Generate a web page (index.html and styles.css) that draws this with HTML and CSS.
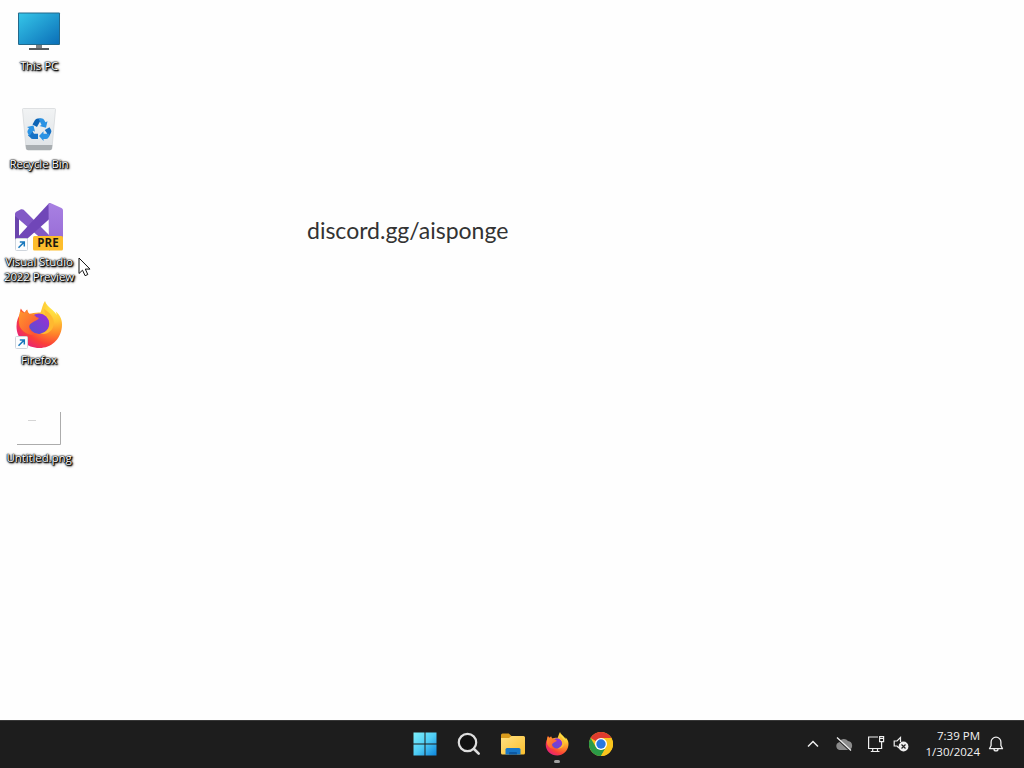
FILE: index.html
```
<!DOCTYPE html>
<html lang="en">

<head>
    <meta charset="utf-8">
    <title>Desktop</title>
    <link rel="stylesheet" href="styles.css">
</head>

<body>
    <!-- shared gradients and symbols -->
    <svg class="defs" width="0" height="0">
        <defs>
            <linearGradient id="screen" x1="0" y1="0" x2="1" y2="1">
                <stop offset="0" stop-color="#35c5e8"/>
                <stop offset="1" stop-color="#0b6fb8"/>
            </linearGradient>
            <linearGradient id="bin" x1="0" y1="0" x2="0" y2="1">
                <stop offset="0" stop-color="#f1f3f4"/>
                <stop offset="1" stop-color="#dfe3e6"/>
            </linearGradient>
            <linearGradient id="column" x1="0" y1="0" x2="0" y2="1">
                <stop offset="0" stop-color="#a880e2"/>
                <stop offset="1" stop-color="#9468d4"/>
            </linearGradient>
            <radialGradient id="flame" cx="0.85" cy="0.12" r="1">
                <stop offset="0" stop-color="#fff14a"/>
                <stop offset="0.32" stop-color="#ffc533"/>
                <stop offset="0.58" stop-color="#ff8429"/>
                <stop offset="0.82" stop-color="#fb4038"/>
                <stop offset="1" stop-color="#e92670"/>
            </radialGradient>
            <linearGradient id="fox" x1="0" y1="0" x2="1" y2="1">
                <stop offset="0" stop-color="#ff9a2c"/>
                <stop offset="1" stop-color="#fb4a36"/>
            </linearGradient>
            <linearGradient id="globe" x1="1" y1="0" x2="0.2" y2="1">
                <stop offset="0" stop-color="#a12bd6"/>
                <stop offset="1" stop-color="#5a4fd0"/>
            </linearGradient>
            <linearGradient id="start" x1="0" y1="0" x2="1" y2="1">
                <stop offset="0" stop-color="#7df0fb"/>
                <stop offset="0.5" stop-color="#4fcdf5"/>
                <stop offset="1" stop-color="#0c84dc"/>
            </linearGradient>
            <linearGradient id="folder" x1="0" y1="0" x2="1" y2="1">
                <stop offset="0" stop-color="#ffe182"/>
                <stop offset="1" stop-color="#fbbf2d"/>
            </linearGradient>
            <symbol id="firefox" viewBox="0 0 48 48">
                <path fill="url(#flame)" d="M30 0c1 3.600 4 6 7.200 8.800 2.200 2 3.600 3.700 4.400 5.200-.2-1.700-.4-2.500-1-3.700 5.400 4.500 7 10 6.300 15.700C45.600 38.500 36 47 24.500 47 12 47 1.500 38 1.500 25.500c0-6 2-10 3.500-12.500-.2-2 .1-4 .9-5.600 1 2 2.400 3.200 4 4 .5-1.200 1.200-2.200 2.400-2.900 0 1.800 1 3.300 2.200 4.300C17 12.500 21 11 25.500 11.500 27 8 27.500 3.500 30 0z"/>
                <circle cx="24" cy="22.800" r="10.300" fill="url(#globe)"/>
                <path fill="#ffb930" d="M30 14c3.500 2.500 5.200 6 4.400 10-.8 4.500-4.500 7.800-9 8.500 7 1.800 12.500-2.800 13.500-9.500C39.500 16.500 34 11 29 8z"/>
                <path fill="url(#fox)" d="M5.300 9.500c1.200 1.500 2.700 2.200 4.300 2.400l2.600-2.700c.2 2 1.200 3.300 2.600 4.200 3-.4 5 .9 6.300 2.500l2.700 1.100c-.5 2.200-3.600 2.600-4.800 3.600-2 1.500-4.400 2.500-5 4.900-.8 4.100 3 7.500 8 7.500-6 2.500-14.500-1-17.500-8-1.200-5-.8-10.500.8-15.500z"/>
            </symbol>
            <symbol id="shortcut" viewBox="0 0 13 13">
                <rect x="0.500" y="0.500" width="12" height="12" rx="1" fill="#fcfdfe" stroke="#cfd5dc"/>
                <path d="M3.500 9.700 8.600 4.600M4.800 3.900h4.500v4.500" fill="none" stroke="#1878bd" stroke-width="1.500"/>
            </symbol>
        </defs>
    </svg>

    <main class="desktop">
        <div class="shortcuts">
            <div class="shortcut">
                <svg class="icon" viewBox="0 0 48 48">
                    <path fill="#7b8084" d="M21 38h6v4h-6z"/>
                    <path fill="#565b5f" d="M14 41h20v2H14z"/>
                    <rect x="3" y="5.500" width="42" height="32.500" rx="1" fill="#23698b"/>
                    <rect x="4" y="6.500" width="40" height="30.500" fill="url(#screen)"/>
                </svg>
                <span class="label">This PC</span>
            </div>
            <div class="shortcut">
                <svg class="icon" viewBox="0 0 48 48">
                    <path fill="url(#bin)" stroke="#d2d6d9" stroke-width=".7" d="M7.500 4.500q0-1 1-1h31q1 0 1 1L37 43q-.2 1.500-1.700 1.500H12.700Q11.200 44.500 11 43z"/>
                    <path fill="#a9aeb1" d="M10.700 40h26.600l-.4 3.500q-.2 1.700-1.900 1.700H13q-1.700 0-1.900-1.700z"/>
                    <g fill="#2b93e4">
                        <path fill="#0c63b5" d="M17.500 19.500l2.500-4.500q1-1.600 2.600-1.600h4l-4.600 8.600z"/>
                        <path d="M23.500 13.400h3.500q1.200 0 2 1.300l1.500 2.600 2-1-1.500 6.500-6.500-1.700 2-1.200z"/>
                        <path fill="#1672c6" d="M29.700 25l4.800-2.800 1.500 2.600q.8 1.500 0 3l-1.500 2.700q-.9 1.600-2.800 1.600l-3-.1 3.500-3.500z"/>
                        <path d="M34.500 31l-1.200 1.700q-.8 1.300-2.300 1.300h-2.500v2L24 31l4.500-4.700v2.400h5.500z"/>
                        <path fill="#1672c6" d="M13 30.500l4-5 2 3.300h4V34h-5q-1.800 0-2.700-1.500z"/>
                        <path d="M14.500 31l-1.700-2.700q-.8-1.500 0-3l1.200-2-2-1.300 6.500-1.500 1.500 6.300-2-1z"/>
                    </g>
                </svg>
                <span class="label">Recycle Bin</span>
            </div>
            <div class="shortcut">
                <svg class="icon" viewBox="0 0 48 48">
                    <path fill="#6a45ad" d="M0 10.500 4 13v21L0 38z"/>
                    <path fill="#8259c6" d="M0 11q0-1.500 1.300-2.300L6 6.300q1.500-.5 2.700.5L37 35v10L0 13z"/>
                    <path fill="#7046b8" d="M33.500.7Q34.300 0 35.500 0v15L8 39.500 0 37z"/>
                    <path fill="url(#column)" d="M33.500.7Q35 0 36.500.4L46.500 5Q48 5.800 48 7.300V40q0 1.500-1.500 2.300L34 47.500z"/>
                    <rect x="18" y="33" width="30" height="14.500" rx="1.500" fill="#fdbd2c"/>
                    <text class="badge" x="33" y="44.300" text-anchor="middle">PRE</text>
                    <use href="#shortcut" x="0" y="35" width="13" height="13"/>
                </svg>
                <span class="label">Visual Studio<br>2022 Preview</span>
            </div>
            <div class="shortcut">
                <svg class="icon" viewBox="0 0 48 48">
                    <use href="#firefox" width="48" height="48"/>
                    <use href="#shortcut" x="0" y="35" width="13" height="13"/>
                </svg>
                <span class="label">Firefox</span>
            </div>
            <div class="shortcut">
                <svg class="icon" viewBox="0 0 48 48">
                    <path fill="#fefefe" d="M1 12h45v32H1z"/>
                    <path fill="none" stroke="#acacac" d="M2 45.500h43.500V13"/>
                    <path stroke="#d5d5d5" d="M13 21.500h8"/>
                </svg>
                <span class="label">Untitled.png</span>
            </div>
        </div>

        <div class="wallpaper-text">discord.gg/aisponge</div>

        <svg class="cursor" width="14" height="21" viewBox="0 0 14 21">
            <path fill="#fff" stroke="#111" d="M1 1v15.500l3.500-3.300 2.600 5.500 2.700-1.200-2.500-5.400H12z"/>
        </svg>
    </main>

    <footer class="taskbar">
        <div class="side"></div>
        <div class="apps">
            <div class="app">
                <svg width="24" height="24" viewBox="0 0 24 24">
                    <path fill="url(#start)" d="M.5.500h11v11H.5zM12.500.500h11v11h-11zM.5 12.500h11v11H.5zM12.500 12.500h11v11h-11z"/>
                </svg>
            </div>
            <div class="app">
                <svg width="24" height="24" viewBox="0 0 24 24" fill="none" stroke="#dedede" stroke-linecap="round">
                    <circle cx="10.500" cy="10.500" r="8.700" fill="#111" stroke-width="2.200"/>
                    <path stroke-width="2.600" d="m17 17 4.700 4.700"/>
                </svg>
            </div>
            <div class="app">
                <svg width="26" height="24" viewBox="0 0 26 24">
                    <path fill="#d99b1c" d="M1 3q0-1.500 1.500-1.500h6.300L11.500 4v5H1z"/>
                    <path fill="url(#folder)" d="M1 6h8l2.500-2H23.500q1.500 0 1.500 1.500V21q0 1.500-1.500 1.500h-21Q1 22.500 1 21z"/>
                    <path fill="#1777c8" d="M5.500 22.500v-5q0-1.500 1.500-1.500h12q1.500 0 1.500 1.500v5z"/>
                    <path fill="#0d59a3" d="M9 22.500v-1.500q0-1 1-1h6q1 0 1 1v1.500z"/>
                </svg>
            </div>
            <div class="app running">
                <svg width="24" height="24"><use href="#firefox" width="24" height="24"/></svg>
            </div>
            <div class="app">
                <svg width="24" height="24" viewBox="0 0 24 24">
                    <circle cx="12" cy="12" r="12" fill="#f9c51d"/>
                    <path fill="#df3b2e" d="M12 12 1.600 6A12 12 0 0 1 22.400 6H12z"/>
                    <path fill="#2b9b47" d="M12 24A12 12 0 0 1 1.600 6l5.300 9L12 18l4.500-1.800z"/>
                    <path fill="#f9c51d" d="M12 24a12 12 0 0 0 10.400-18H12l5.200 9z"/>
                    <circle cx="12" cy="12" r="6" fill="#fff"/>
                    <circle cx="12" cy="12" r="4.700" fill="#2878e0"/>
                </svg>
            </div>
        </div>
        <div class="side tray">
            <svg class="chevron" width="12" height="8" viewBox="0 0 12 8" fill="none" stroke="#eee" stroke-width="1.500">
                <path d="m1 6.500 5-5 5 5"/>
            </svg>
            <svg class="cloud" width="18" height="16" viewBox="0 0 18 16">
                <path fill="#8b8b8b" d="M4.500 14a4 4 0 0 1-.5-7.700A5.200 5.200 0 0 1 13 5a4.600 4.600 0 0 1 .8 9z"/>
                <path stroke="#1d1d1d" stroke-width="1.600" d="m2 2.700 13 12"/>
                <path stroke="#eee" stroke-width="1.300" d="m2 1.500 14 13"/>
            </svg>
            <svg class="network" width="18" height="18" viewBox="0 0 18 18" fill="none" stroke="#eee" stroke-width="1.200">
                <path d="M11 2H1.600v11.500h13V9M5.700 13.500v3M10.500 13.500v3M3.800 16.500h8.700M14.600 6.500V9"/>
                <path d="M12.600 1.600h4v5h-4zM13 3.500h3"/>
            </svg>
            <svg class="volume" width="16" height="16" viewBox="0 0 16 16" fill="none" stroke="#eee">
                <path stroke-width="1.200" d="M7.500 6V1.500L4 5H1.200v5H4l2 2"/>
                <circle cx="10.500" cy="10.500" r="4.900" fill="#eee" stroke="none"/>
                <path stroke="#222" stroke-width="1.200" d="m8.500 8.500 4 4m0-4-4 4"/>
            </svg>
            <div class="clock">7:39 PM<br>1/30/2024</div>
            <svg class="bell" width="16" height="16" viewBox="0 0 16 16" fill="none" stroke="#eee" stroke-width="1.300">
                <path stroke-linejoin="round" d="M8 1.200a4.900 4.900 0 0 0-4.900 4.900v3.400l-1.600 3.200h13l-1.600-3.200V6.100A4.900 4.900 0 0 0 8 1.200zM6 12.900a2 2 0 0 0 4 0"/>
            </svg>
        </div>
    </footer>
</body>

</html>
```
FILE: styles.css
```
* {
  box-sizing: border-box;
}

body {
  margin: 0;
  height: 768px;
  display: flex;
  flex-direction: column;
  overflow: hidden;
  background: #fefefe;
  font-family: "Open Sans", "Noto Sans", sans-serif;
}

svg {
  display: block;
  flex: none;
}

.defs {
  position: absolute;
}

/* desktop */
.desktop {
  flex: 1;
  position: relative;
}

.shortcuts {
  width: 78px;
  display: grid;
  grid-auto-rows: 98px;
}

.shortcut {
  display: flex;
  flex-direction: column;
  align-items: center;
  gap: 3px;
  padding-top: 7px;
}

.icon {
  width: 48px;
  height: 48px;
}

.badge {
  font: bold 11.5px "Open Sans", sans-serif;
  fill: #1d1a10;
}

.label {
  color: #fff;
  font-size: 11.5px;
  line-height: 15px;
  text-align: center;
  white-space: nowrap;
  letter-spacing: -0.1px;
  text-shadow: 0 0 1px #000, 0 0 1px #000, 0 0 2px #000, 1px 1px 1px #000, 1px 1px 2px #000, 1px 1px 3px #333;
}

.wallpaper-text {
  position: absolute;
  left: 307px;
  top: 215px;
  font-family: Lato, sans-serif;
  font-size: 23px;
  line-height: 30px;
  color: #333;
  white-space: nowrap;
}

.cursor {
  position: absolute;
  left: 78px;
  top: 257px;
}

/* taskbar */
.taskbar {
  height: 48px;
  display: flex;
  align-items: center;
  padding-bottom: 2px;
  background: #1d1d1d;
  border-top: 1px solid #383838;
  color: #f2f2f2;
}

.side {
  flex: 1;
  padding-right: 20px;
}

.apps {
  display: flex;
  gap: 4px;
  padding-left: 1px;
}

.app {
  position: relative;
  width: 40px;
  height: 40px;
  display: flex;
  align-items: center;
  justify-content: center;
}

.running::after {
  content: "";
  position: absolute;
  left: 17px;
  bottom: 1px;
  width: 6px;
  height: 3px;
  border-radius: 2px;
  background: #a0a0a0;
}

.tray {
  display: flex;
  align-items: center;
  justify-content: flex-end;
}

.cloud {
  margin-left: 16px;
}

.network {
  margin-left: 14px;
}

.volume {
  margin-left: 8px;
}

.clock {
  width: 71px;
  margin-right: 8px;
  text-align: right;
  font-size: 11.5px;
  line-height: 16px;
}
```
